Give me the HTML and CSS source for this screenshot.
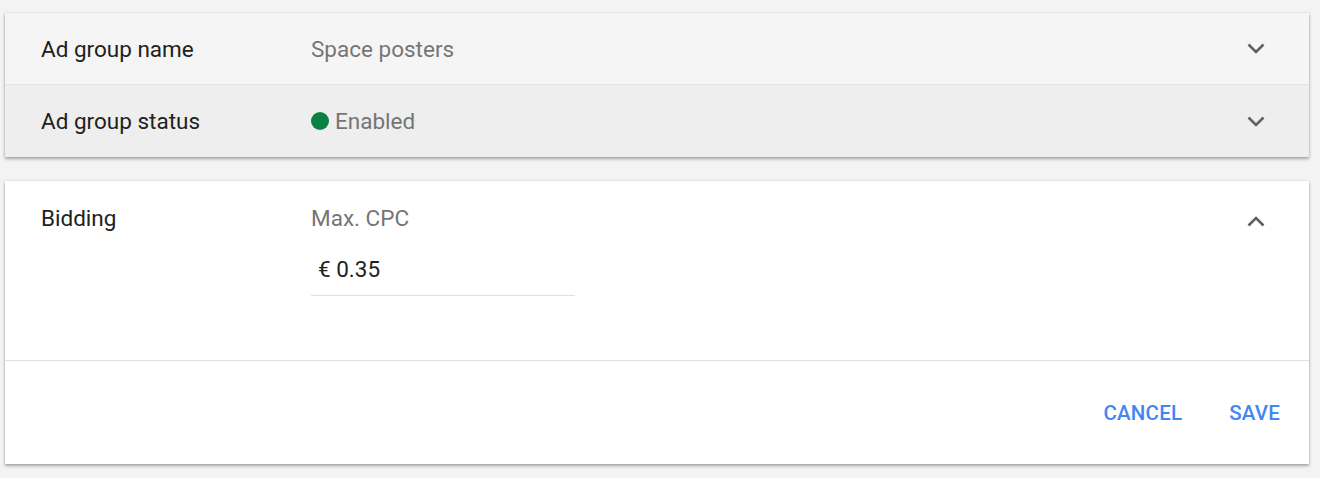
FILE: index.html
```html
<!DOCTYPE html>
<html>
<head>
<meta charset="utf-8">
<link rel="stylesheet" href="styles.css">
</head>
<body>
<div class="page">
  <div class="card summary">
    <div class="row row-name">
      <div class="label">Ad group name</div>
      <div class="value">Space posters</div>
      <svg class="chev" width="18" height="11" viewBox="0 0 18 11"><polyline points="1.5,1.5 9,9 16.5,1.5" fill="none" stroke="#616161" stroke-width="2.6"/></svg>
    </div>
    <div class="row row-status">
      <div class="label">Ad group status</div>
      <div class="value"><span class="dot"></span>Enabled</div>
      <svg class="chev" width="18" height="11" viewBox="0 0 18 11"><polyline points="1.5,1.5 9,9 16.5,1.5" fill="none" stroke="#616161" stroke-width="2.6"/></svg>
    </div>
  </div>

  <div class="card edit">
    <div class="edit-body">
      <div class="label">Bidding</div>
      <div class="field">
        <div class="field-label">Max. CPC</div>
        <div class="input">€ 0.35</div>
      </div>
      <svg class="chev up" width="18" height="11" viewBox="0 0 18 11"><polyline points="1.5,9.5 9,2 16.5,9.5" fill="none" stroke="#616161" stroke-width="2.6"/></svg>
    </div>
    <div class="edit-footer">
      <button class="btn">CANCEL</button>
      <button class="btn">SAVE</button>
    </div>
  </div>
</div>
</body>
</html>
```
FILE: styles.css
```css
html, body {
  margin: 0;
  padding: 0;
  background: #f3f3f3;
  font-family: Roboto, "Liberation Sans", sans-serif;
}
.page {
  padding: 13px 0 14px 5px;
  width: 1304px;
  display: flex;
  flex-direction: column;
  gap: 24px;
}
.card {
  box-shadow: 0 2px 3px rgba(0,0,0,0.3), 0 0 2px rgba(0,0,0,0.15);
}
.row {
  display: flex;
  align-items: center;
  padding: 0 44px 0 36px;
  font-size: 22.5px;
  color: #212121;
}
.row-name {
  height: 71px;
  background: #f5f5f5;
  border-bottom: 1px solid #e3e3e3;
}
.row-status {
  height: 72px;
  background: #eeeeee;
}
.label {
  width: 270px;
  font-size: 22.5px;
  color: #212121;
}
.value {
  flex: 1;
  color: #757575;
  display: flex;
  align-items: center;
}
.dot {
  width: 18px;
  height: 18px;
  border-radius: 50%;
  background: #0b8043;
  margin-right: 6px;
}
.chev {
  display: block;
}
.edit {
  background: #fff;
}
.edit-body {
  display: flex;
  align-items: flex-start;
  padding: 24px 44px 0 36px;
  height: 155px;
  border-bottom: 1px solid #e0e0e0;
}
.edit-body .label {
  line-height: 26px;
}
.field {
  flex: 1;
}
.field-label {
  font-size: 22.5px;
  line-height: 26px;
  color: #757575;
}
.input {
  width: 257px;
  padding: 25px 0 13px 7px;
  font-size: 22.5px;
  line-height: 26px;
  color: #212121;
  border-bottom: 1px solid #e0e0e0;
}
.up {
  margin-top: 11px;
}
.edit-footer {
  height: 103px;
  display: flex;
  align-items: center;
  justify-content: flex-end;
  gap: 47px;
  padding-right: 29px;
}
.btn {
  background: none;
  border: none;
  padding: 0;
  font-family: Roboto, "Liberation Sans", sans-serif;
  font-weight: 500;
  font-size: 20.5px;
  color: #4285f4;
  letter-spacing: 0.2px;
  cursor: pointer;
}
```
